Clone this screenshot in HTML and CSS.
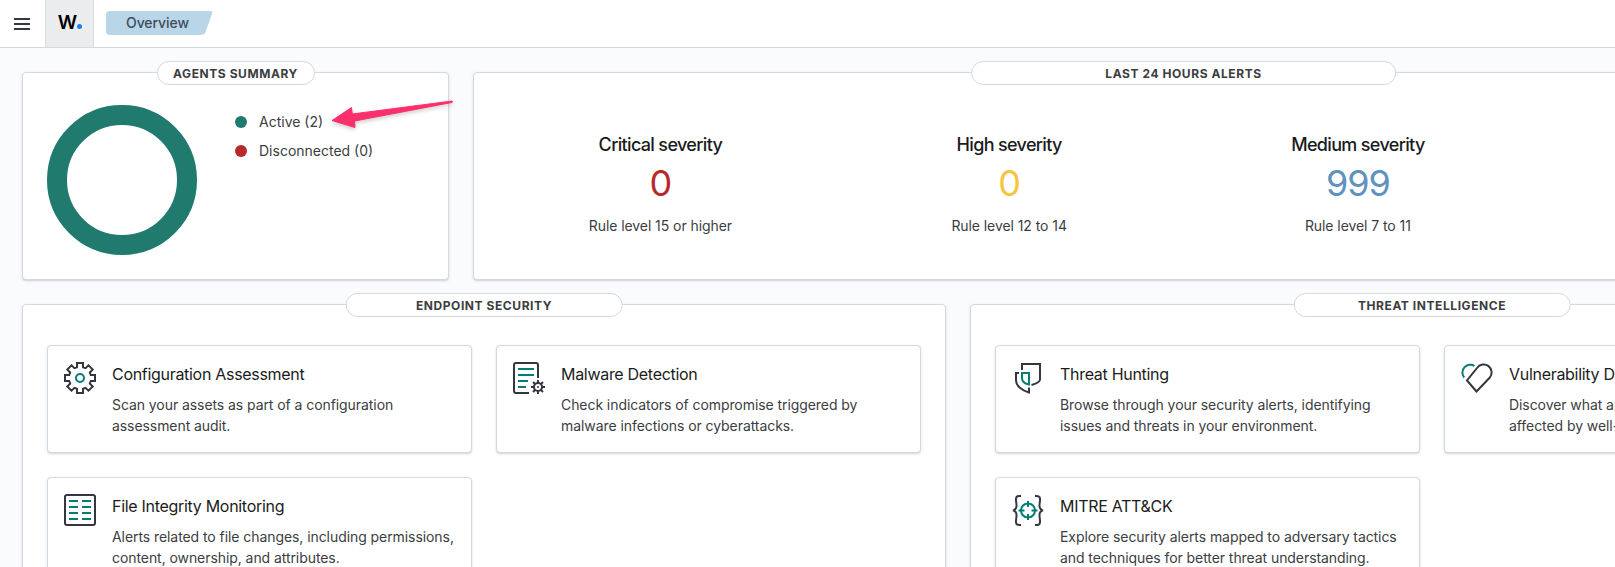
FILE: index.html
```html
<!DOCTYPE html>
<html lang="en">
<head>
<meta charset="utf-8">
<title>Overview</title>
<link rel="stylesheet" href="styles.css">
</head>
<body>
<header class="topbar">
  <button class="menu" aria-label="Menu"><svg width="16" height="12" viewBox="0 0 16 12"><path d="M0 1h16M0 6h16M0 11h16" stroke="#343741" stroke-width="2"/></svg></button>
  <div class="logo">W<i class="logo-dot"></i></div>
  <nav class="crumb"><svg class="crumb-bg" width="107" height="24" viewBox="0 0 107 24"><path d="M4 0H104.500Q107 0 106.200 2.200L99.500 21Q98.300 24 95 24H4Q0 24 0 20V4Q0 0 4 0Z" fill="#b9d5e8"/></svg><span class="crumb-text">Overview</span></nav>
</header>
<main class="page">
  <section class="panel agents">
    <h2 class="pill pill-fit">AGENTS SUMMARY</h2>
    <svg class="donut" width="150" height="150" viewBox="0 0 150 150"><circle cx="75" cy="75" r="65" fill="none" stroke="#207a6e" stroke-width="20"/></svg>
    <ul class="legend">
      <li><i class="dot green"></i>Active (2)</li>
      <li><i class="dot red"></i>Disconnected (0)</li>
    </ul>
    <svg class="arrow" width="130" height="36" viewBox="0 0 130 36"><path d="M4 23.500L23.500 10.500L24.300 17L124 4L124.500 4.500L124 5.500L26.500 24L27 30.500Z" fill="#fb2f6c" stroke="#fb2f6c" stroke-width="1" stroke-linejoin="round"/></svg>
  </section>
  <section class="panel alerts">
    <h2 class="pill">LAST 24 HOURS ALERTS</h2>
    <div class="stat"><h3>Critical severity</h3><b class="num critical">0</b><p>Rule level 15 or higher</p></div>
    <div class="stat"><h3>High severity</h3><b class="num high">0</b><p>Rule level 12 to 14</p></div>
    <div class="stat"><h3>Medium severity</h3><b class="num medium">999</b><p>Rule level 7 to 11</p></div>
    <div class="stat"></div>
  </section>
  <section class="panel modules">
    <h2 class="pill">ENDPOINT SECURITY</h2>
    <article class="card">
      <svg class="icon" viewBox="0 0 32 32"><path d="M13 1H19V5.200L21.500 6.200L24.500 3.300L28.700 7.500L25.800 10.500L26.800 13H31V19H26.800L25.800 21.500L28.700 24.500L24.500 28.700L21.500 25.800L19 26.800V31H13V26.800L10.500 25.800L7.500 28.700L3.300 24.500L6.200 21.500L5.200 19H1V13H5.200L6.200 10.500L3.300 7.500L7.500 3.300L10.500 6.200L13 5.200Z"/><circle class="accent" cx="16" cy="16" r="4"/></svg>
      <div><h3>Configuration Assessment</h3><p>Scan your assets as part of a configuration<br>assessment audit.</p></div>
    </article>
    <article class="card">
      <svg class="icon" viewBox="0 0 32 32"><path d="M25 16V3a2 2 0 0 0-2-2H3a2 2 0 0 0-2 2V29a2 2 0 0 0 2 2H16"/><path class="accent" d="M5 7H21M5 13H21M5 19H15M5 25H13"/><circle cx="25" cy="25" r="4"/><circle cx="25" cy="25" r="1" class="solid"/><path d="M25 18V21M25 29V32M18 25H21M29 25H32M20 20L22.200 22.200M27.800 27.800L30 30M30 20L27.800 22.200M22.200 27.800L20 30"/></svg>
      <div><h3>Malware Detection</h3><p>Check indicators of compromise triggered by<br>malware infections or cyberattacks.</p></div>
    </article>
    <article class="card">
      <svg class="icon" viewBox="0 0 32 32"><rect x="1" y="1" width="30" height="30" rx="2"/><path class="accent" d="M5 7H14M18 7H27M5 13H14M18 13H27M5 19H14M18 19H27M5 25H14M18 25H27"/></svg>
      <div><h3>File Integrity Monitoring</h3><p>Alerts related to file changes, including permissions,<br>content, ownership, and attributes.</p></div>
    </article>
  </section>
  <section class="panel modules">
    <h2 class="pill">THREAT INTELLIGENCE</h2>
    <article class="card">
      <svg class="icon" viewBox="0 0 32 32"><path d="M10 8V2H28V17.500Q28 20.500 19.500 23M7 11H4V18.500C4 24 10 28.500 17 30.500V25.500"/><path class="accent" d="M10 11H17V22.500Q10 21 10 16Z"/></svg>
      <div><h3>Threat Hunting</h3><p>Browse through your security alerts, identifying<br>issues and threats in your environment.</p></div>
    </article>
    <article class="card">
      <svg class="icon" viewBox="0 0 32 32"><path d="M15.500 29.500L6 18.500L16 6A8 8 0 1 1 28.600 15.800Z"/><path class="accent" d="M3.200 15.500A7.800 7.800 0 0 1 13.500 4"/></svg>
      <div><h3>Vulnerability Detection</h3><p>Discover what applications in your environment are<br>affected by well-known vulnerabilities.</p></div>
    </article>
    <article class="card">
      <svg class="icon" viewBox="0 0 32 32"><path d="M9 2H7Q3.500 2 4 6.500L4.500 11Q4.800 15.500 1 16.500Q4.800 17 4.500 22L4 26.500Q3.500 31 7 31H9M23 2H25Q28.500 2 28 6.500L27.500 11Q27.200 15.500 31 16.500Q27.200 17 27.500 22L28 26.500Q28.500 31 25 31H23"/><circle class="accent" cx="16" cy="16.500" r="7"/><path class="accent" d="M16 7V13M16 20V26M6.500 16.500H12.500M19.500 16.500H25.500"/></svg>
      <div><h3>MITRE ATT&amp;CK</h3><p>Explore security alerts mapped to adversary tactics<br>and techniques for better threat understanding.</p></div>
    </article>
  </section>
</main>
</body>
</html>
```
FILE: styles.css
```css
* { box-sizing: border-box; margin: 0; padding: 0; }
html, body { height: 567px; overflow: hidden; }
body { font: 14px/21px Inter, "Liberation Sans", sans-serif; letter-spacing: -0.07px; color: #3b3d42; background: #fafbfd; }
.topbar { display: flex; align-items: center; height: 48px; background: #fff; border-bottom: 1px solid #d3d9df; }
.menu { display: flex; width: 45px; padding-left: 14px; border: 0; background: none; }
.logo { display: flex; align-items: baseline; justify-content: center; width: 49px; height: 47px; padding-left: 1px; background: #ebeced; border: solid #d9dce1; border-width: 0 1px; color: #000; font-size: 19px; line-height: 46px; font-weight: 600; }
.logo-dot { width: 5px; height: 5px; border-radius: 50%; background: #1f7cf0; }
.crumb { display: grid; margin: 0 0 2px 12px; }
.crumb-bg, .crumb-text { grid-area: 1 / 1; }
.crumb-text { padding: 1px 0 0 20px; font-weight: 500; color: #3f4c5b; }
.page { display: grid; grid-template-columns: repeat(1873, 1px); row-gap: 24px; padding: 24px 0 0 22px; }
.panel { position: relative; grid-column: span 924; background: #fff; border: 1px solid #d3d9df; border-radius: 4px; box-shadow: 0 1px 3px rgba(60, 70, 90, .14), 0 1px 1px rgba(60, 70, 90, .1); }
.panel:last-child { grid-column: 949 / span 924; }
.pill { position: absolute; top: -12px; left: 50%; transform: translateX(-50%); width: 30%; height: 24px; border: 1px solid #d3d9df; border-radius: 12px; background: #fff; font-size: 12px; line-height: 23px; font-weight: 700; letter-spacing: .57px; text-align: center; white-space: nowrap; }
.pill-fit { width: 158px; }
.agents { grid-column: 1 / span 427; display: flex; height: 208px; padding: 32px 24px; }
.donut { flex: none; }
.legend { list-style: none; padding: 6px 0 0 38px; letter-spacing: 0; }
.legend li { display: flex; align-items: center; gap: 12px; height: 21px; margin-bottom: 8px; }
.dot { width: 12px; height: 12px; border-radius: 50%; }
.green { background: #207a6e; }
.red { background: #b82a2a; }
.arrow { position: absolute; left: 305px; top: 24px; filter: drop-shadow(0 2px 2px rgba(0, 0, 0, .2)); }
.alerts { grid-column: 452 / span 1421; display: grid; grid-template-columns: repeat(4, 1fr); padding: 59px 12px 0; height: 208px; text-align: center; }
.stat h3 { font-size: 18px; line-height: 26px; font-weight: 500; letter-spacing: -.66px; color: #1a1c21; }
.num { display: block; margin-top: 3px; font-size: 36px; line-height: 44px; font-weight: 400; letter-spacing: -1px; }
.critical { color: #b82a2a; }
.high { color: #f5c540; }
.medium { color: #6092c0; }
.stat p { margin-top: 10px; }
.modules { display: grid; grid-template-columns: 425px 425px; grid-auto-rows: 108px; gap: 24px; height: 400px; padding: 40px 24px; }
.card { display: flex; gap: 16px; padding: 16px; background: #fff; border: 1px solid #d3d9df; border-radius: 4px; box-shadow: 0 1px 3px rgba(60, 70, 90, .14), 0 1px 1px rgba(60, 70, 90, .1); overflow: hidden; white-space: nowrap; }
.card h3 { font-size: 16px; line-height: 24px; font-weight: 400; letter-spacing: -.3px; color: #1a1c21; margin-bottom: 8px; }
.icon { flex: none; width: 32px; height: 32px; fill: none; stroke: #343741; stroke-width: 2; }
.icon .accent { stroke: #017d73; }
.icon .solid { fill: #343741; stroke: none; }
```
